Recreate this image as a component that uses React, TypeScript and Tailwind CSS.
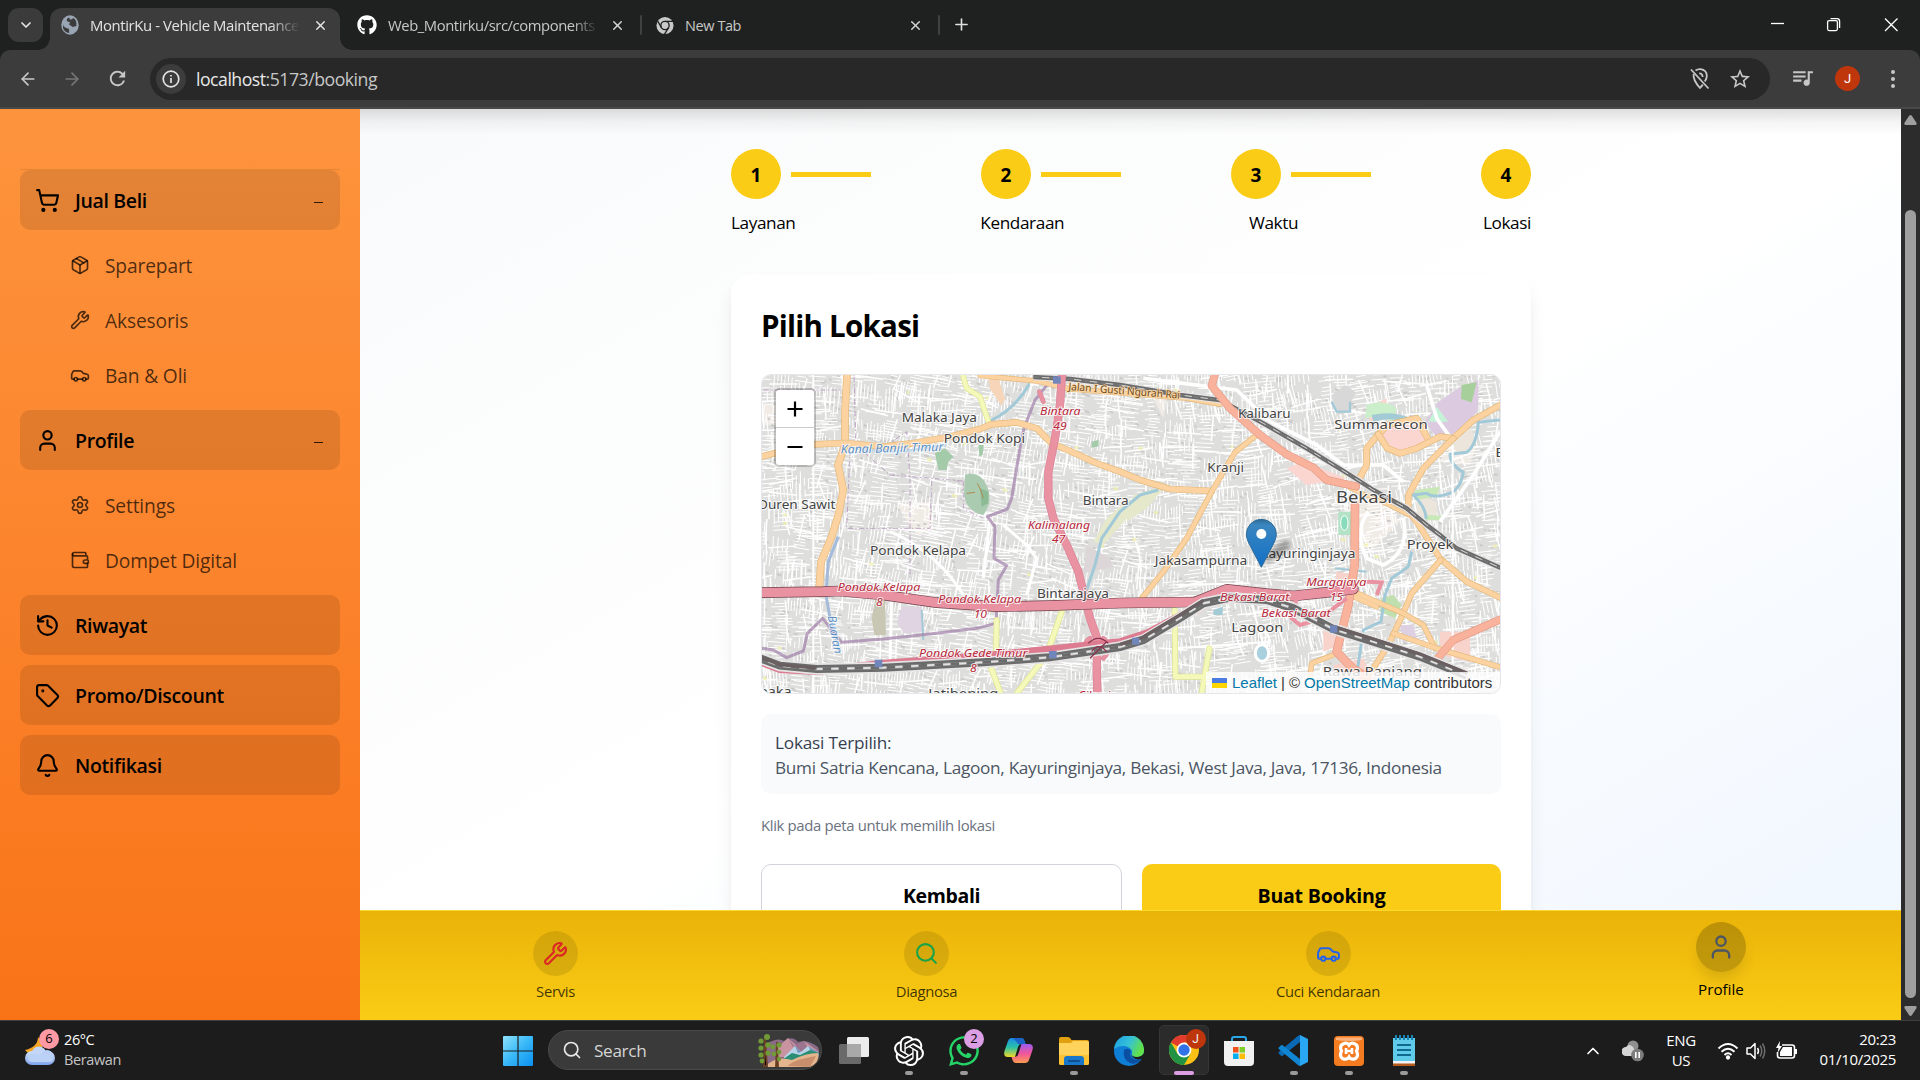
import React from "react";
import {
  ArrowLeft,
  ArrowRight,
  Bell,
  Car,
  ChevronDown,
  ChevronUp,
  History,
  Package,
  Plus,
  Search,
  Settings,
  ShoppingCart,
  Tag,
  User,
  Wallet,
  Wrench,
  X,
} from "lucide-react";
import { FaGithub, FaWhatsapp } from "react-icons/fa";
import { SiOpenai } from "react-icons/si";
import { MdOutlineStarBorder, MdQueueMusic, MdRefresh } from "react-icons/md";

/* ---------------------------------------------------------------- browser */

function TabStrip() {
  return (
    <div className="flex h-[50px] w-full bg-[#1f2120] text-[14.5px] text-[#c7c7c7]">
      <div className="mt-2 ml-2 flex h-[34px] w-[35px] items-center justify-center rounded-[11px] bg-[#3b3b3b] text-[#e3e3e3]">
        <ChevronDown size={16} strokeWidth={2.6} />
      </div>
      <div className="relative mt-2 ml-[7px] flex h-[42px] w-[290px] items-center rounded-t-[12px] bg-[#3c3c3c] pl-[11px] text-[#e3e3e3]">
        <div className="absolute bottom-0 -left-3 h-3 w-3 bg-[radial-gradient(circle_at_0_0,transparent_11.5px,#3c3c3c_12px)]" />
        <div className="absolute -right-3 bottom-0 h-3 w-3 bg-[radial-gradient(circle_at_100%_0,transparent_11.5px,#3c3c3c_12px)]" />
        <svg width="18" height="20" viewBox="0 0 20 20" className="-mt-[6px] mb-[2px]" preserveAspectRatio="none">
          <circle cx="10" cy="10" r="9.7" fill="#9aa5b3" />
          <path d="M3 8 Q2 12 6 13 L9 14 V18 Q4 17.5 2.2 13 Z M9 2.5 Q5 4 7 6.5 L10 7 L9 9.5 L13 12 L17 11 Q18 5 13.5 3 Q12 5 10 4.5 Z" fill="#3c3c3c" />
        </svg>
        <div className="mt-[-8px] ml-[11px] w-[210px] overflow-hidden whitespace-nowrap text-[14.9px] tracking-[-0.4px] [mask-image:linear-gradient(to_right,#000_86%,transparent)]">
          MontirKu - Vehicle Maintenance
        </div>
        <X size={15} strokeWidth={2.3} className="-mt-[8px] ml-[13px]" />
      </div>
      <div className="flex h-[50px] w-[300px] items-center pl-[17px]">
        <FaGithub size={20} className="text-white" />
        <div className="mt-px ml-[11px] w-[210px] overflow-hidden whitespace-nowrap text-[14.8px] tracking-[-0.42px] [mask-image:linear-gradient(to_right,#000_88%,transparent)]">
          Web_Montirku/src/components
        </div>
        <X size={15} strokeWidth={2.3} className="ml-[12px] text-[#d5d5d5]" />
      </div>
      <div className="mt-[15px] h-[20px] w-[2px] rounded bg-[#3f4140]" />
      <div className="flex h-[50px] w-[296px] items-center pl-[14px]">
        <svg width="18" height="19" viewBox="0 0 20 20">
          <circle cx="10" cy="10" r="9.5" fill="#c9c9c9" />
          <circle cx="10" cy="10" r="4.6" fill="none" stroke="#1f2120" strokeWidth="1.5" />
          <path d="M10 5.4 H19 M6 12.3 L1.8 5 M14 12.3 L9.5 19.5" stroke="#1f2120" strokeWidth="1.5" />
        </svg>
        <div className="mt-px ml-[11px] w-[223px] whitespace-nowrap tracking-[-0.42px]">New Tab</div>
        <X size={15} strokeWidth={2.3} className="text-[#d5d5d5]" />
      </div>
      <div className="mt-[15px] h-[20px] w-[2px] rounded bg-[#3f4140]" />
      <Plus size={19} strokeWidth={2.1} className="mt-[15px] ml-[12px] text-[#e0e0e0]" />
      <svg width="130" height="16" viewBox="0 0 130 16" className="mt-[16px] mr-[21px] ml-auto" fill="none" stroke="#fff" strokeWidth="1.3">
        <path d="M2 7.5 H15" />
        <rect x="58.6" y="4.6" width="9.8" height="10" rx="1.5" />
        <path d="M61.5 2.6 H68 Q70.6 2.6 70.6 5.2 V12" />
        <path d="M116 2.5 L128.500 15 M128.500 2.5 L116 15" />
      </svg>
    </div>
  );
}

function Toolbar() {
  return (
    <div className="w-full bg-[#1f2120]">
      <div className="flex h-[59px] w-full items-center rounded-t-[10px] border-b-2 border-[#494949] bg-[#3c3c3c] text-[#c7c7c7]">
        <ArrowLeft size={20} strokeWidth={2} className="ml-[18px]" />
        <ArrowRight size={20} strokeWidth={2} className="ml-[24px] text-[#777]" />
        <MdRefresh size={23} className="ml-[24px]" />
        <div className="ml-[21px] flex h-[42px] w-[1620px] items-center rounded-full bg-[#282828]">
          <div className="ml-[6px] flex h-[30px] w-[30px] items-center justify-center rounded-full bg-[#3c3c3c]">
            <svg width="18" height="18" viewBox="0 0 18 18" fill="none" stroke="#e3e3e3" strokeWidth="1.7">
              <circle cx="9" cy="9" r="7.8" />
              <path d="M9 8 V13 M9 5 V6.6" />
            </svg>
          </div>
          <div className="mt-[2px] ml-[10px] text-[17.7px] tracking-[-0.5px] whitespace-nowrap text-[#c7c7c7]">
            <span className="text-[#e8e8e8]">localhost</span>:5173/booking
          </div>
          <svg width="20" height="22" viewBox="0 0 20 22" className="ml-auto" fill="none" stroke="#c7c7c7" strokeWidth="1.8">
            <path d="M1 1.5 L18.5 20.5" />
            <path d="M5.5 2.6 Q8 .9 10.5 1.2 Q16.8 2 16.8 8 Q16.8 10.6 14.8 13.6" />
            <path d="M3.6 6 Q2.8 12 10 20 Q11.6 18.2 12.8 16.6" />
            <path d="M9.2 5.4 Q12.6 5.4 12.6 9" />
          </svg>
          <MdOutlineStarBorder size={24} className="mr-[18px] ml-[18px]" />
        </div>
        <MdQueueMusic size={25} className="mt-[-3px] ml-[20px]" />
        <div className="ml-[20px] flex h-[25px] w-[25px] items-center justify-center rounded-full bg-[#bf360c] font-['Roboto',sans-serif] text-[13px] text-white">J</div>
        <div className="ml-[31px] flex flex-col gap-[3px]">
          <div className="h-1 w-1 rounded-full bg-[#c7c7c7]" />
          <div className="h-1 w-1 rounded-full bg-[#c7c7c7]" />
          <div className="h-1 w-1 rounded-full bg-[#c7c7c7]" />
        </div>
      </div>
    </div>
  );
}

/* ---------------------------------------------------------------- sidebar */

type IconType = React.ComponentType<{ size?: number; strokeWidth?: number; className?: string }>;

function MenuButton({ icon: Icon, label, open }: { icon: IconType; label: string; open?: boolean }) {
  return (
    <div className="flex h-[60px] w-[320px] items-center rounded-[10px] bg-black/10 px-[15px] text-black">
      <Icon size={25} strokeWidth={2} />
      <span className="mt-[2px] ml-[15px] text-[19.5px] font-semibold tracking-[-0.35px]">{label}</span>
      {open && <span className="mt-[4px] mr-[2px] ml-auto h-px w-[9px] bg-black/80" />}
    </div>
  );
}

function SubItem({ icon: Icon, label }: { icon: IconType; label: string }) {
  return (
    <div className="flex h-[50px] items-center pl-[50px] text-black/70">
      <Icon size={20} strokeWidth={2} />
      <span className="mt-[2px] ml-[15px] text-[19.2px] tracking-[-0.15px]">{label}</span>
    </div>
  );
}

function Sidebar() {
  return (
    <div className="h-[911px] w-[360px] shrink-0 bg-linear-to-b from-[#fd943d] to-[#f97316] px-5 pt-[60px]">
      <div className="border-t border-[#e58637]" />
      <MenuButton icon={ShoppingCart} label="Jual Beli" open />
      <div className="my-[10px] flex flex-col gap-[5px]">
        <SubItem icon={Package} label="Sparepart" />
        <SubItem icon={Wrench} label="Aksesoris" />
        <SubItem icon={Car} label="Ban & Oli" />
      </div>
      <MenuButton icon={User} label="Profile" open />
      <div className="my-[10px] flex flex-col gap-[5px]">
        <SubItem icon={Settings} label="Settings" />
        <SubItem icon={Wallet} label="Dompet Digital" />
      </div>
      <div className="flex flex-col gap-[10px]">
        <MenuButton icon={History} label="Riwayat" />
        <MenuButton icon={Tag} label="Promo/Discount" />
        <MenuButton icon={Bell} label="Notifikasi" />
      </div>
    </div>
  );
}

/* -------------------------------------------------------------------- map */

function seeded(seed: number) {
  let s = seed;
  return () => {
    s = (s * 1664525 + 1013904223) % 4294967296;
    return s / 4294967296;
  };
}

function buildStreets() {
  const rnd = seeded(42);
  let streets = "";
  let wide = "";
  let blocks = "";
  let dots = "";
  const add = (cx: number, cy: number, a: number, u0: number, v0: number, u1: number, v1: number) => {
    const c = Math.cos(a);
    const s = Math.sin(a);
    const x0 = cx + u0 * c - v0 * s;
    const y0 = cy + u0 * s + v0 * c;
    const x1 = cx + u1 * c - v1 * s;
    const y1 = cy + u1 * s + v1 * c;
    return `M${x0.toFixed(0)} ${y0.toFixed(0)}L${x1.toFixed(0)} ${y1.toFixed(0)}`;
  };
  for (let y = 20; y < 1010; y += 50) {
    for (let x = 20; x < 2280; x += 56) {
      const cx = x + rnd() * 30;
      const cy = y + rnd() * 30;
      const a = (rnd() - 0.5) * 0.25 + Math.sin(x / 400) * 0.15;
      const step = 8 + rnd() * 7;
      const along = rnd() > 0.5;
      for (let t = -28; t < 28; t += step) {
        const l = 10 + rnd() * 20;
        const off = (rnd() - 0.5) * 20;
        streets += along ? add(cx, cy, a, t, off - l, t, off + l) : add(cx, cy, a, off - l, t, off + l, t);
        if (rnd() > 0.5) {
          blocks += add(cx, cy, a, t + 5, off, t + 5 + rnd() * 14, off + 4);
        }
      }
      if (rnd() > 0.5) wide += add(cx, cy, a, -42, rnd() * 26, 42, rnd() * 26);
      if (rnd() > 0.5) wide += add(cx, cy, a, rnd() * 26, -38, rnd() * 26, 38);
      if (rnd() > 0.95) dots += add(cx, cy, a, 0, 0, 8 + rnd() * 8, 3);
    }
  }
  return { streets, wide, blocks, dots };
}

const net = buildStreets();

function Road({ d, color, w, casing }: { d: string; color: string; w: number; casing: string }) {
  return (
    <g fill="none" strokeLinejoin="round" strokeLinecap="round">
      <path d={d} stroke={casing} strokeWidth={w + 4} />
      <path d={d} stroke={color} strokeWidth={w} />
    </g>
  );
}

const ORANGE = { color: "#fcd3a0", casing: "#e3b87a" };
const SALMON = { color: "#f9b29c", casing: "#e59c86" };
const TRUNK = { color: "#e892a2", casing: "#dc8398" };
const YELLOW = { color: "#f4f8b8", casing: "#dde293" };

function Rail({ d, thin }: { d: string; thin?: boolean }) {
  return (
    <g fill="none">
      <path d={d} stroke="#e6e4e4" strokeWidth={thin ? 20 : 34} />
      <path d={d} stroke="#6b6b6b" strokeWidth={thin ? 13 : 24} />
      <path d={d} stroke="#a8a8a8" strokeWidth={thin ? 3 : 9} />
      <path d={d} stroke="#6b6b6b" strokeWidth={thin ? 3 : 9} strokeDasharray="26 22" />
      <path d={d} stroke="#e4e4e4" strokeWidth={thin ? 2 : 5} strokeDasharray="22 26" strokeDashoffset="-26" />
    </g>
  );
}

function Label({ x, y, w, t, size = 40, fill = "#444" }: { x: number; y: number; w: number; t: string; size?: number; fill?: string }) {
  return (
    <text x={x} y={y} textLength={w} lengthAdjust="spacingAndGlyphs" fontSize={size} fill={fill} stroke="#ffffffcc" strokeWidth="6" paintOrder="stroke" strokeLinejoin="round">
      {t}
    </text>
  );
}

function RedLabel({ x, y, w, t }: { x: number; y: number; w: number; t: string }) {
  return (
    <text x={x} y={y} textLength={w} lengthAdjust="spacingAndGlyphs" fontSize="35" fontStyle="italic" fill="#b8283a" stroke="#ffffffcc" strokeWidth="6" paintOrder="stroke">
      {t}
    </text>
  );
}

function MapCanvas() {
  return (
    <svg width="738" height="318" viewBox="36 30 2214 954" className="block font-['Noto_Sans',sans-serif]">
      <rect x="0" y="0" width="2300" height="1000" fill="#dededd" />
      <g fill="#f0ebe5">
        <path d="M40 120 h90 v60 h-90z M440 420 l60 90 50 -20 -10 -80z M1780 420 l110 -30 60 80 -90 90z M2100 200 l80 40 -20 60 -90 -10z M1200 80 l50 20 -10 60z" />
      </g>
      <path d={net.blocks} stroke="#cbcac9" strokeWidth="6" fill="none" />
      <path d={net.streets} stroke="#fff" strokeWidth="3" fill="none" />
      <path d={net.wide} stroke="#fff" strokeWidth="4.5" fill="none" />
      <path d={net.dots} stroke="#eef0a6" strokeWidth="9" fill="none" opacity="0.7" />

      <g>
        <path d="M645 330 Q690 315 712 365 Q730 410 700 450 Q650 440 642 390Z" fill="#aacbaf" />
        <path d="M690 370 l25 10 v35 l-20 10z" fill="#8dbb95" />
        <path d="M650 385 l25 -3 M682 355 l10 20 8 25" stroke="#b08a50" strokeWidth="3" fill="none" />
        <path d="M555 265 l30 -15 25 25 -15 15 -5 25 -25 0z M685 240 h16 l-3 30 -10 4z M1026 230 l20 -6 0 20 -22 4z" fill="#a3cba9" />
        <path d="M455 725 l60 0 8 75 -60 5 -22 -30z" fill="#e0d4e2" />
        <path d="M375 705 l30 0 3 105 -35 0 -8 -50z" fill="#c8c7b4" />
        <path d="M715 40 l30 0 20 60 -10 22 -35 -50z" fill="#f6d5b8" />
        <path d="M1140 400 l0 50 -80 90 -30 -10 40 -70z M1150 390 l100 -30 -60 70 -60 40z" fill="#e5e8cb" />
        <path d="M1010 540 l70 40 10 25 -90 20z" fill="#dcd6d8" />
        <path d="M2025 170 l40 -60 60 -40 60 -25 0 90 -60 70 -60 20z" fill="#dccbe0" />
        <path d="M2060 125 l35 45 -60 0z" fill="#c5f3d8" />
        <path d="M2135 60 l45 -8 -15 60 -32 -10z" fill="#a7cf9c" />
        <path d="M1895 180 l110 0 40 50 -110 30 -40 -30z M1790 340 l-130 -50 -50 20 60 50z M1850 130 l60 -30 0 50 -50 20z" fill="#fbd5cf" />
        <path d="M1850 120 q50 -20 90 10 l-10 40 q-60 -20 -85 -10z" fill="#cbeecb" />
        <path d="M1865 150 q60 -15 120 10 l-10 12 q-60 -18 -105 -2z" fill="#a2cbd5" />
        <path d="M2100 240 l60 -50 20 40 -50 40z M2000 390 l60 20 0 55 -60 -10z" fill="#ece5dc" />
        <path d="M1745 90 l40 -30 30 20 -20 60 -30 10z" fill="#d8d8d8" />
        <path d="M1995 375 l75 -10 -10 30 -65 10z M2030 450 l45 2 0 14 -50 0z" fill="#c8e8b8" />
        <rect x="1765" y="440" width="38" height="70" fill="#b3e2c6" />
        <ellipse cx="1783" cy="474" rx="11" ry="22" fill="#88dcbc" stroke="#fff" strokeWidth="3" />
        <path d="M1760 620 l60 10 0 50 -70 0z M1720 780 l60 0 -10 60 -50 20z M2070 800 l90 0 0 90 -90 -20z M1750 900 l90 -20 30 60 -100 20z" fill="#f7d3cc" />
        <path d="M1370 690 l0 40 -30 20 -10 -40z" fill="#f6cfcb" />
        <path d="M1895 700 l35 -10 25 30 -20 40 -45 -20z" fill="#bfe0ae" />
        <path d="M1950 780 l40 0 10 40 -40 10z" fill="#ddd0e2" />
      </g>

      <g fill="none" stroke="#a2c9d8" strokeWidth="9" strokeLinejoin="round">
        <path d="M845 45 Q800 130 720 168" />
        <path d="M590 240 L440 262 L310 250" stroke="#bcd6e6" strokeWidth="7" />
        <path d="M1225 375 L1170 390 L1110 440 L1055 520 L1035 600 L1005 690" />
        <path d="M265 515 L235 590 L228 690 L240 760 L270 860" stroke="#a4bbd9" />
        <path d="M2250 165 L2185 172 Q2180 240 2150 262 L2100 268 Q2100 300 2140 322 Q2130 380 2090 388 Q2050 400 2030 385 L1990 390 Q2030 430 2028 462" />
        <path d="M1985 560 L1975 605 L1925 640 L1905 690 L1893 770 L1840 795 L1820 930" />
        <path d="M1755 610 L1850 620 M515 735 l5 90" strokeWidth="6" />
        <path d="M1745 110 l15 30 40 0 0 -30" strokeWidth="7" />
      </g>

      <g fill="none" stroke="#fff" strokeLinejoin="round">
        <path d="M840 60 L905 40 M720 455 L700 640 M760 480 L830 540 L860 580 L830 690 M425 690 L420 900 M420 500 Q560 560 640 690" strokeWidth="9" />
        <path d="M1180 40 L1460 75 L1560 170 L1700 240 L1780 300 L1900 300 L1960 350 M2030 60 L2060 160 L2110 230 M2250 200 L2170 330 L2070 470 M1855 440 Q1810 500 1850 580 L1900 600 Q1980 560 1960 460" strokeWidth="11" />
        <path d="M1500 700 L1540 840 M1280 850 L1560 830 M190 30 L190 985 M2108 240 L2108 985 M1530 800 q40 0 20 50 M1280 660 L1500 655" strokeWidth="6" />
      </g>
      <ellipse cx="1536" cy="864" rx="20" ry="25" fill="#a9d0dd" stroke="#fff" strokeWidth="9" />
      <path d="M1390 735 l28 -10 0 25 -28 0z" fill="#a2cbd5" />

      <g fill="none" stroke="#b592bd" strokeWidth="3" strokeDasharray="16 7 4 7" opacity="0.8">
        <path d="M312 35 L318 240 L420 330 L640 348 M40 75 H300 M300 255 L290 490 L540 490 L545 340 M480 340 L480 640 M380 260 L470 200 L480 335 M640 348 L640 430 L700 460" />
      </g>
      <path d="M895 55 L855 105 L822 190 L803 290 L785 400 L772 432 L712 455 L735 485 L732 580 L770 602 L745 645 L738 775 L680 790 L560 805 L400 822 L275 832 L218 760 L172 805 L160 858 L110 878 L70 855 L36 850" fill="none" stroke="#a07fa8" strokeWidth="9" opacity="0.7" strokeLinejoin="round" />

      <Road d="M640 35 L650 70 L690 95 L718 178" w={13} {...YELLOW} />
      <Road d="M935 740 L890 870 L800 985" w={14} {...YELLOW} />
      <Road d="M740 765 L738 870 L722 905 L752 985" w={14} {...YELLOW} />
      <Road d="M1274 735 L1276 935 L1390 935 M1378 850 L1355 985" w={14} {...YELLOW} />

      <Road d="M291 30 L285 140 L285 240 L264 300 L280 375 L265 450 L245 515 L213 590 L208 665" w={19} {...ORANGE} />
      <Road d="M30 276 L90 260 L195 238 L285 234 L400 245 L480 236 L600 215 L690 192 L725 178 L800 172 L860 190 L905 235 L960 258 L1040 295 L1110 320 L1170 345 L1260 372 L1385 378" w={16} {...ORANGE} />
      <Road d="M690 32 L860 48 L960 72 L1140 86 L1310 100 L1410 118" w={12} {...ORANGE} />
      <Road d="M1516 213 L1455 262 L1385 380 L1310 520 L1240 620 L1175 700" w={13} {...ORANGE} />
      <Road d="M1815 365 L1850 300 L1850 250 L1885 208 L1912 180 L2000 160 L2032 218" w={16} {...ORANGE} />
      <Road d="M1885 208 L1912 250 L1950 265 L2000 250 L2070 215 L2110 220 L2170 165 L2255 118" w={16} {...ORANGE} />
      <Road d="M2110 220 L2020 310 L1975 390 L1975 440 L2000 470 L2070 580 L2150 650 L2255 700" w={15} {...ORANGE} />
      <Road d="M1800 370 L1900 412 L1975 450" w={9} {...ORANGE} />
      <Road d="M2072 585 L1985 685 L1955 755 L1915 840 L1860 925" w={14} {...ORANGE} />
      <Road d="M1800 675 L1890 715 L1960 745 L2020 780 L2055 850 M1800 690 L1880 725" w={13} {...ORANGE} />
      <Road d="M1930 805 L2060 850 L2245 905" w={13} {...ORANGE} />
      <Road d="M1680 935 L1685 895 L1755 868" w={12} {...ORANGE} />

      <Rail thin d="M850 36 L960 42 L1110 60 L1290 90 L1410 105 L1540 175 L1670 250 L1800 330 L1870 375 L1970 430 L2030 480 L2070 510 L2120 550 L2255 610" />

      <Road d="M1395 28 L1385 62 L1440 130 L1530 210 L1610 268 L1690 308 L1730 345 L1818 364" w={20} {...SALMON} />
      <Road d="M1815 420 L1814 600 L1795 720 L1775 800 L1760 860 L1810 912 L1850 935" w={22} {...SALMON} />
      <Road d="M2255 762 L2110 825 L2050 895" w={20} {...SALMON} />

      <Road d="M936 28 L930 120 L915 220 L895 320 L895 400 L910 460 L950 540 L985 620 L1005 700 L1020 760 L1045 830 L1040 900 L1042 985" w={21} {...TRUNK} />
      <Road d="M868 80 L880 110 M1010 860 Q1000 830 1020 820 M1060 820 Q1090 850 1060 880" w={10} {...TRUNK} />
      <Road d="M30 683 L220 680 L270 678 L400 690 L560 713 L740 725 L900 722 L1110 714 L1335 711 L1430 673 L1540 685 L1630 693 L1750 680 L1810 672" w={28} color="#e892a2" casing="#72404a" />
      <path d="M1850 650 L1895 652 L1880 690 M1640 700 L1625 760 L1650 780 L1700 765 L1750 730 L1790 700" fill="none" stroke="#e892a2" strokeWidth="12" />

      <path d="M36 892 L90 912 L200 918 L400 896 L700 874 L1110 832 L1190 806 L1300 748" fill="none" stroke="#dd7b90" strokeWidth="24" />
      <Rail d="M30 880 L90 902 L200 912 L400 908 L700 892 L900 877 L1110 846 L1180 825 L1280 765 L1360 715 L1440 698 L1550 705 L1630 730 L1750 792 L1870 830 L2010 875 L2150 932" />
      <path d="M36 878 L90 899 L200 909 M1110 838 L1180 816 L1280 756 L1360 706 M1750 784 L2010 867 L2150 924" fill="none" stroke="#6a6062" strokeWidth="10" />
      <path d="M1015 835 q30 -30 60 0 M1025 860 q20 -30 45 0 M1020 880 l50 -50" fill="none" stroke="#8a3550" strokeWidth="4" />

      <g fill="#7186bb">
        <rect x="909" y="34" width="23" height="22" />
        <rect x="374" y="884" width="23" height="23" />
        <rect x="897" y="858" width="23" height="22" />
        <rect x="1740" y="781" width="22" height="22" />
        <rect x="1146" y="818" width="22" height="21" />
      </g>

      <Label x={455} y={171} w={226} t="Malaka Jaya" />
      <Label x={581} y={234} w={244} t="Pondok Kopi" />
      <Label x={24} y={432} w={232} t="Duren Sawit" />
      <Label x={360} y={570} w={288} t="Pondok Kelapa" />
      <Label x={998} y={419} w={138} t="Bintara" />
      <Label x={861} y={700} w={216} t="Bintarajaya" />
      <Label x={1464} y={160} w={158} t="Kalibaru" />
      <Label x={1753} y={192} w={280} t="Summarecon" />
      <Label x={1372} y={320} w={110} t="Kranji" />
      <Label x={1758} y={413} w={168} t="Bekasi" size={49} />
      <Label x={1970} y={553} w={140} t="Proyek" />
      <Label x={1214} y={600} w={278} t="Jakasampurna" />
      <Label x={1530} y={578} w={286} t="Kayuringinjaya" />
      <Label x={1444} y={801} w={156} t="Lagoon" />
      <Label x={1718} y={934} w={298} t="Rawa Panjang" />
      <Label x={2236} y={276} w={26} t="E" />
      <Label x={0} y={992} w={125} t="npaka" />
      <Label x={535} y={1000} w={210} t="Jatibening" />

      <RedLabel x={870} y={150} w={122} t="Bintara" />
      <RedLabel x={910} y={195} w={40} t="49" />
      <RedLabel x={834} y={492} w={186} t="Kalimalang" />
      <RedLabel x={906} y={535} w={40} t="47" />
      <RedLabel x={263} y={678} w={248} t="Pondok Kelapa" />
      <RedLabel x={378} y={722} w={20} t="8" />
      <RedLabel x={565} y={715} w={248} t="Pondok Kelapa" />
      <RedLabel x={671} y={759} w={40} t="10" />
      <RedLabel x={507} y={876} w={325} t="Pondok Gede Timur" />
      <RedLabel x={660} y={920} w={20} t="8" />
      <RedLabel x={1410} y={709} w={208} t="Bekasi Barat" />
      <RedLabel x={1534} y={757} w={208} t="Bekasi Barat" />
      <RedLabel x={1669} y={663} w={180} t="Margajaya" />
      <RedLabel x={1740} y={708} w={38} t="15" />
      <RedLabel x={985} y={1003} w={110} t="Cikunir" />

      <text fontSize="36" fontStyle="italic" fill="#5a8fc4" stroke="#ffffffcc" strokeWidth="5" paintOrder="stroke" x="272" y="262" textLength="308" lengthAdjust="spacingAndGlyphs" transform="rotate(-1.5 420 255)">
        Kanal Banjir Timur
      </text>
      <text fontSize="35" fontStyle="italic" fill="#5a8fc4" stroke="#ffffffcc" strokeWidth="5" paintOrder="stroke" transform="translate(233 754) rotate(80)" textLength="115" lengthAdjust="spacingAndGlyphs">
        Buaran
      </text>
      <text fontSize="31" fill="#6b4a20" stroke="#fcd6a4" strokeWidth="5" paintOrder="stroke" transform="translate(955 75) rotate(4.5)" textLength="335" lengthAdjust="spacingAndGlyphs">
        Jalan I Gusti Ngurah Rai
      </text>

      <defs>
        <linearGradient id="pin" x1="0" y1="0" x2="0" y2="1">
          <stop offset="0" stopColor="#2e6c97" />
          <stop offset="0.12" stopColor="#3a86c0" />
          <stop offset="1" stopColor="#126fc6" />
        </linearGradient>
        <filter id="soft" x="-30%" y="-30%" width="160%" height="160%">
          <feGaussianBlur stdDeviation="7" />
        </filter>
      </defs>
      <path d="M1536 604 L1560 560 Q1600 515 1618 530 Q1630 550 1590 575 Z" fill="#000" opacity="0.3" filter="url(#soft)" />
      <path d="M1534 607 L1502 545 Q1489 522 1489 508 A45 45 0 0 1 1579 508 Q1579 522 1566 545 Z" fill="url(#pin)" stroke="#2e6c97" strokeWidth="3" />
      <circle cx="1534" cy="507" r="15" fill="#fff" />
    </svg>
  );
}

function MapPanel() {
  return (
    <div className="relative h-[320px] w-[740px] overflow-hidden rounded-[10px] border border-[#e5e7eb]">
      <MapCanvas />
      <div className="absolute top-[13px] left-[12px] w-[42px] overflow-hidden rounded-[5px] border-2 border-black/20 bg-white bg-clip-padding">
        <div className="flex h-[38px] items-center justify-center border-b border-[#ccc]">
          <svg width="16" height="16" viewBox="0 0 16 16" stroke="#000" strokeWidth="2.2">
            <path d="M.5 8 H15.5 M8 .5 V15.5" />
          </svg>
        </div>
        <div className="flex h-[37px] items-center justify-center">
          <svg width="16" height="16" viewBox="0 0 16 16" stroke="#000" strokeWidth="2">
            <path d="M.5 8 H15.5" />
          </svg>
        </div>
      </div>
      <div className="absolute right-0 bottom-0 flex h-[21px] w-[294px] items-center bg-white/80 pt-px pl-[6px] font-['Liberation_Sans',Arial,sans-serif] text-[15px] whitespace-nowrap text-[#333]">
        <svg width="15" height="10" viewBox="0 0 15 10">
          <rect width="15" height="5" fill="#4c7be1" />
          <rect y="5" width="15" height="5" fill="#ffd500" />
        </svg>
        <span className="ml-[5px] text-[#0078a8]">Leaflet</span>
        <span className="ml-1">|</span>
        <span className="ml-1">©</span>
        <span className="ml-1 text-[#0078a8]">OpenStreetMap</span>
        <span className="ml-1">contributors</span>
      </div>
    </div>
  );
}

/* ------------------------------------------------------------------- page */

function Step({ n, last }: { n: number; last?: boolean }) {
  return (
    <div className={last ? "flex w-[50px] items-center" : "flex w-[250px] items-center"}>
      <div className="flex h-[50px] w-[50px] items-center justify-center rounded-full bg-[#facc15] pt-[3px] text-[19px] font-bold text-black">{n}</div>
      {!last && <div className="ml-[10px] h-[5px] w-[80px] bg-[#facc15]" />}
    </div>
  );
}

function NavItem({ icon: Icon, label, tint, width }: { icon: IconType; label: string; tint: string; width: string }) {
  return (
    <div className={`flex flex-col items-center pt-[20px] ${width}`}>
      <div className={`flex h-[45px] w-[45px] items-center justify-center rounded-full bg-black/10 ${tint}`}>
        <Icon size={25} strokeWidth={2} />
      </div>
      <span className="mt-[5px] text-[14.8px] leading-5 font-medium tracking-[-0.3px] whitespace-nowrap text-black/75">{label}</span>
    </div>
  );
}

function BottomNav() {
  return (
    <div className="absolute bottom-0 left-0 flex h-[110px] w-[1541px] justify-between border-t border-[#fbd92f] bg-linear-to-b from-[#eab308] to-[#facc15] pr-[155px] pl-[173px]">
      <NavItem icon={Wrench} label="Servis" tint="text-[#dc2626]" width="w-[45px]" />
      <NavItem icon={Search} label="Diagnosa" tint="text-[#16a34a]" width="ml-[2px] w-[63px]" />
      <NavItem icon={Car} label="Cuci Kendaraan" tint="text-[#2563eb]" width="ml-[2px] w-[106px]" />
      <div className="flex w-[50px] flex-col items-center pt-[11px]">
        <div className="flex h-[50px] w-[50px] items-center justify-center rounded-full bg-black/20 text-[#4b5563] shadow-[0_10px_15px_-3px_rgba(0,0,0,0.12)]">
          <User size={28} strokeWidth={2} />
        </div>
        <span className="mt-[7px] text-[15.2px] leading-5 font-medium tracking-[0px] text-black">Profile</span>
      </div>
    </div>
  );
}

function Main() {
  return (
    <div className="relative h-[911px] w-[1541px] shrink-0 overflow-hidden bg-linear-to-br from-[#f9fafb] via-white via-50% to-[#eff6ff]">
      <div className="absolute top-0 left-0 h-[26px] w-full bg-linear-to-b from-black/13 via-black/4 to-transparent" />
      <div className="ml-[371px] w-[800px] pt-[40px]">
        <div className="flex">
          <Step n={1} />
          <Step n={2} />
          <Step n={3} />
          <Step n={4} last />
        </div>
        <div className="mt-[11px] flex h-[25px] items-center justify-between text-[17.2px] leading-[25px] tracking-[-0.4px] text-black">
          <span>Layanan</span>
          <span>Kendaraan</span>
          <span>Waktu</span>
          <span>Lokasi</span>
        </div>
        <div className="mt-[39px] h-[760px] w-[800px] rounded-[20px] bg-white px-[30px] pt-[32px] shadow-[0_12px_19px_-4px_rgba(0,0,0,0.1),0_5px_8px_-5px_rgba(0,0,0,0.08)]">
          <h1 className="mb-[28px] h-[40px] text-[29.5px] leading-[39px] font-bold tracking-[-0.75px] text-black">Pilih Lokasi</h1>
          <MapPanel />
          <div className="mt-[20px] h-[80px] rounded-[10px] bg-[#f9fafb] px-[14px] pt-[16px] text-[17.2px] leading-[25px] whitespace-nowrap">
            <div className="font-medium tracking-[-0.2px] text-[#374151]">Lokasi Terpilih:</div>
            <div className="tracking-[-0.3px] text-[#4b5563]">Bumi Satria Kencana, Lagoon, Kayuringinjaya, Bekasi, West Java, Java, 17136, Indonesia</div>
          </div>
          <div className="mt-[20px] h-[20px] text-[14.9px] leading-[22px] tracking-[-0.35px] text-[#6b7280]">Klik pada peta untuk memilih lokasi</div>
          <div className="mt-[30px] flex justify-between text-[19.5px] font-bold tracking-[-0.35px] text-black">
            <div className="flex h-[64px] w-[361px] items-center justify-center rounded-[10px] border border-[#d1d5db]">Kembali</div>
            <div className="flex h-[64px] w-[359px] items-center justify-center rounded-[10px] bg-[#facc15] tracking-[-0.2px]">Buat Booking</div>
          </div>
        </div>
      </div>
      <BottomNav />
    </div>
  );
}

function Scrollbar() {
  return (
    <div className="flex h-[911px] w-[19px] shrink-0 flex-col items-center bg-[#2c2c2c] pt-[6px]">
      <svg width="13" height="10" viewBox="0 0 13 10" fill="#9f9f9f">
        <path d="M6.5 0 Q7.3 0 8 1 L12.6 8 Q13 10 11.5 10 H1.5 Q0 10 .4 8 L5 1 Q5.7 0 6.5 0Z" />
      </svg>
      <div className="mt-[85px] h-[788px] w-[11px] rounded-full bg-[#9f9f9f]" />
      <svg width="13" height="10" viewBox="0 0 13 10" fill="#9f9f9f" className="mt-[8px]">
        <path d="M6.5 10 Q7.3 10 8 9 L12.6 2 Q13 0 11.5 0 H1.5 Q0 0 .4 2 L5 9 Q5.7 10 6.5 10Z" />
      </svg>
    </div>
  );
}

/* ---------------------------------------------------------------- taskbar */

function TaskCell({ children, running }: { children: React.ReactNode; running?: boolean }) {
  return (
    <div className="relative flex h-full w-[55px] shrink-0 items-center justify-center">
      {children}
      {running && <div className="absolute bottom-[5px] left-[24px] h-[4px] w-[8px] rounded-full bg-[#9a9a9a]" />}
    </div>
  );
}

function SearchArt() {
  return (
    <svg width="62" height="34" viewBox="0 0 62 34">
      <path d="M10 10 Q20 4 26 8 Q34 2 40 9 Q50 6 60 14 Q64 24 54 32 H10 Q4 20 10 10Z" fill="#8a6a86" />
      <path d="M20 14 L30 5 L38 12 L46 8 L60 18 V24 H20Z" fill="#c994a0" />
      <path d="M30 5 L35 14 L38 12 L46 8 L50 15 L60 18 L52 20 L40 18Z" fill="#7d5f86" opacity="0.6" />
      <path d="M26 24 L37 13 L43 19 L50 13 L61 20 L60 25 H26Z" fill="#b7d3e8" />
      <path d="M37 13 L40 20 L43 19Z M50 13 L54 20 L61 20Z" fill="#6f93bb" />
      <path d="M24 27 L34 20 L42 22 L52 17 L61 20 L58 27 H24Z" fill="#2b8d74" />
      <path d="M8 33 Q18 22 34 27 Q48 20 60 20 Q62 30 52 34 H10Z" fill="#e4b58c" />
      <path d="M30 33 Q34 27 58 23 L52 34Z" fill="#c98f6c" />
      <path d="M6 33 L7 4 L9 33Z M18 33 L19 9 L20 33Z" stroke="#6b3f24" strokeWidth="1.8" />
      <g fill="#6f9a36">
        <circle cx="3" cy="8" r="2.6" />
        <circle cx="9" cy="4" r="3" />
        <circle cx="3" cy="15" r="2.6" />
        <circle cx="10" cy="12" r="2.8" />
        <circle cx="3" cy="22" r="2.6" />
        <circle cx="10" cy="20" r="2.6" />
        <circle cx="4" cy="28" r="2.4" />
        <circle cx="15" cy="14" r="2.4" />
        <circle cx="21" cy="12" r="2.6" />
        <circle cx="16" cy="21" r="2.4" />
        <circle cx="21" cy="19" r="2.4" />
        <circle cx="21" cy="26" r="2.2" />
      </g>
    </svg>
  );
}

function ChromeLogo() {
  return (
    <svg width="30" height="30" viewBox="0 0 30 30">
      <circle cx="15" cy="15" r="15" fill="#fbc116" />
      <path d="M15 15 L2 7.5 A15 15 0 0 1 28 7.5 H15Z" fill="#e33b2e" />
      <path d="M2 7.5 A15 15 0 0 0 15 30 L21.5 18.75 L8.5 18.75Z" fill="#229342" />
      <circle cx="15" cy="15" r="7.4" fill="#fff" />
      <circle cx="15" cy="15" r="5.7" fill="#3272e8" />
    </svg>
  );
}

function Taskbar() {
  return (
    <div className="flex h-[60px] w-full items-center border-t border-[#3f3f3f] bg-[#1c1c1c] text-white">
      <div className="flex w-[490px] items-center pl-[25px]">
        <div className="relative mt-[-7px]">
          <svg width="34" height="38" viewBox="0 0 34 38">
            <defs>
              <linearGradient id="cloud" x1="0" y1="0" x2="0" y2="1">
                <stop offset="0" stopColor="#d3e2fb" />
                <stop offset="1" stopColor="#7ea4ec" />
              </linearGradient>
            </defs>
            <path d="M13 9 Q13 19 0 22 Q5 28 12 26 Q22 20 13 9Z" fill="#f5a623" />
            <rect x="0" y="23" width="30" height="14" rx="7" fill="url(#cloud)" />
            <circle cx="14" cy="26" r="7.5" fill="#c3d6f8" />
            <circle cx="22" cy="28" r="6" fill="#b9cff6" />
            <rect x="3" y="26" width="25" height="8" rx="4" fill="#bcd1f6" />
          </svg>
          <div className="absolute top-[1px] left-[14px] flex h-[20px] w-[20px] items-center justify-center rounded-full bg-[#ff99a4] text-[13px] text-black">6</div>
        </div>
        <div className="mt-[-1px] ml-[5px] text-[14.5px] leading-[20px] tracking-[-0.4px]">
          <div>26°C</div>
          <div className="text-[#c5c5c5]">Berawan</div>
        </div>
      </div>
      <TaskCell>
        <svg width="30" height="30" viewBox="0 0 30 30">
          <defs>
            <linearGradient id="win" x1="0" y1="0" x2="1" y2="1">
              <stop offset="0" stopColor="#8fe3fb" />
              <stop offset="0.5" stopColor="#38b8f8" />
              <stop offset="1" stopColor="#0a8ff0" />
            </linearGradient>
          </defs>
          <path d="M1 0H14.4V14.4H0V1Q0 0 1 0Z M15.6 0H29Q30 0 30 1V14.4H15.6Z M0 15.6H14.4V30H1Q0 30 0 29Z M15.6 15.6H30V29Q30 30 29 30H15.6Z" fill="url(#win)" />
        </svg>
      </TaskCell>
      <div className="mt-[-1px] ml-[3px] flex h-[40px] w-[274px] shrink-0 items-center overflow-hidden rounded-full border border-[#4a4a4a] bg-[#3a3a3a] pl-[13px]">
        <Search size={20} strokeWidth={2} className="text-[#e8e8e8]" />
        <span className="mt-px ml-[12px] text-[17.2px] tracking-[-0.35px] text-[#d5d5d5]">Search</span>
        <div className="mr-[1px] ml-auto">
          <SearchArt />
        </div>
      </div>
      <div className="ml-[4px] flex h-full">
        <TaskCell>
          <svg width="30" height="30" viewBox="0 0 30 30">
            <rect x="0" y="8" width="22" height="20" rx="1.5" fill="#6a6a6a" />
            <rect x="8" y="1" width="22" height="20" rx="1.5" fill="#ececec" />
            <rect x="8" y="8" width="14" height="13" fill="#a9a9a9" />
          </svg>
        </TaskCell>
        <TaskCell running>
          <SiOpenai size={30} />
        </TaskCell>
        <TaskCell running>
          <FaWhatsapp size={34} className="text-[#25d366]" />
          <div className="absolute top-[8px] left-[28px] flex h-[20px] w-[20px] items-center justify-center rounded-full bg-[#dd9fe3] text-[13px] text-black">2</div>
        </TaskCell>
        <TaskCell>
          <svg width="29" height="27" viewBox="0 0 29 27">
            <defs>
              <linearGradient id="cpa" x1="0" y1="0" x2="0" y2="1">
                <stop offset="0" stopColor="#1b8be8" />
                <stop offset="0.5" stopColor="#2cc3a5" />
                <stop offset="1" stopColor="#f5d723" />
              </linearGradient>
              <linearGradient id="cpb" x1="0" y1="0" x2="0" y2="1">
                <stop offset="0" stopColor="#9b5cf0" />
                <stop offset="0.5" stopColor="#f0569a" />
                <stop offset="1" stopColor="#fb9a4e" />
              </linearGradient>
            </defs>
            <path d="M8 1 H17 Q19.500 1 20.500 4 L21.500 7 H17 Q15 7 14 10 L11 20 H4 Q-1 20 .5 14 L4 4 Q5 1 8 1Z" fill="url(#cpa)" />
            <path d="M21 26 H12 Q9.500 26 8.500 23 L7.500 20 H11 Q13.500 20 14.500 16.500 L17.500 7 H25 Q30 7 28.500 13 L25 23 Q24 26 21 26Z" fill="url(#cpb)" />
            <path d="M8 1 H17 Q19.500 1 20.500 4 L21.500 7 H14 Q11 2 8 1Z" fill="#1c63c8" />
          </svg>
        </TaskCell>
        <TaskCell running>
          <svg width="30" height="28" viewBox="0 0 30 28">
            <path d="M0 2 Q0 0 2 0 H9 Q11 0 12.500 3 H28 Q30 3 30 5 V12 H0Z" fill="#e0a010" />
            <path d="M0 6 H12 L14 4 H28 Q30 4 30 6 V26 Q30 28 28 28 H2 Q0 28 0 26Z" fill="#ffd25c" />
            <path d="M0 18 H30 V26 Q30 28 28 28 H2 Q0 28 0 26Z" fill="#fdc233" />
            <path d="M5 28 V22 Q5 19 8 19 H22 Q25 19 25 22 V28Z" fill="#1877c9" />
            <rect x="9" y="23" width="12" height="2" rx="1" fill="#0d4f90" />
          </svg>
        </TaskCell>
        <TaskCell>
          <svg width="30" height="30" viewBox="0 0 30 30">
            <defs>
              <linearGradient id="eda" x1="0" y1="0" x2="1" y2="0.4">
                <stop offset="0" stopColor="#1b9de2" />
                <stop offset="0.55" stopColor="#35c1d8" />
                <stop offset="1" stopColor="#62e04a" />
              </linearGradient>
            </defs>
            <circle cx="15" cy="15" r="15" fill="#0f7fd6" />
            <path d="M0 13 A15 15 0 0 1 30 15 Q30 21 22 21 Q17 21 18 17.500 Q19 14 15 11.500 Q7 8 0 13Z" fill="url(#eda)" />
            <path d="M10 14 Q8 23 16 27 Q21 29 26 25 Q28 24 27 23 Q22 25 18 22 Q15 19 17 15.500 Q15 11 10 14Z" fill="#0b4fa3" />
            <path d="M17.500 17 Q17 21.500 24 21 Q28 20.500 30 17 V24 L27.500 23 Q22 24.500 18.500 21 Q17 19 17.500 17Z" fill="#1c1c1c" />
          </svg>
        </TaskCell>
        <div className="relative flex h-full w-[55px] items-center justify-center">
          <div className="absolute top-[4px] left-[3px] h-[50px] w-[50px] rounded-[5px] border border-[#363636] bg-[#2b2b2b]" />
          <div className="relative mt-[-1px]">
            <ChromeLogo />
            <div className="absolute -top-[6px] left-[17px] flex h-[20px] w-[20px] items-center justify-center rounded-full bg-[#bf360c] font-['Roboto',sans-serif] text-[12px] text-[#eee]">J</div>
          </div>
          <div className="absolute bottom-[5px] left-[18px] h-[4px] w-[20px] rounded-full bg-[#dd9fe3]" />
        </div>
        <TaskCell>
          <svg width="30" height="30" viewBox="0 0 30 30">
            <path d="M8 6 V3 Q8 1 10 1 H20 Q22 1 22 3 V6" fill="none" stroke="#2aa6ea" strokeWidth="2" />
            <path d="M0 5 H30 V26 Q30 30 26 30 H4 Q0 30 0 26Z" fill="#f1f1f1" />
            <rect x="9" y="11" width="5.500" height="5.500" fill="#f1511b" />
            <rect x="15.500" y="11" width="5.500" height="5.500" fill="#80cc28" />
            <rect x="9" y="17.500" width="5.500" height="5.500" fill="#00adef" />
            <rect x="15.500" y="17.500" width="5.500" height="5.500" fill="#fbbc09" />
          </svg>
        </TaskCell>
        <TaskCell running>
          <svg width="31" height="31" viewBox="0 0 31 31">
            <path d="M22 7 L5 20.500 Q4 21.500 3 20.700 L.7 18.600 Q0 17.800 .8 17 L20.500 .6 L23 0Z" fill="#0a6ab6" />
            <path d="M22 24 L5 10.500 Q4 9.500 3 10.300 L.7 12.400 Q0 13.200 .8 14 L20.500 30.400 L23 31Z" fill="#1085d2" />
            <path d="M22 0 L30 4 V27 L22 31 Z" fill="#2aa7f3" />
          </svg>
        </TaskCell>
        <TaskCell running>
          <svg width="30" height="30" viewBox="0 0 30 30">
            <rect width="30" height="30" rx="4" fill="#f47b20" />
            <path d="M2 1.500 H28 V4 Q15 6 2 4Z" fill="#fbb27a" />
            <path d="M9 8 Q13 6 15 9 Q17 6 21 8 Q25 10 22.500 15 Q25 20 21.500 22.500 Q17 24.500 15 21 Q13 24.500 8.500 22.500 Q5 20 7.500 15 Q5 10 9 8Z" fill="none" stroke="#fff" strokeWidth="3.2" />
            <path d="M11 15 H19 M12 12 V18 M18 12 V18" stroke="#fff" strokeWidth="2.600" />
          </svg>
        </TaskCell>
        <TaskCell running>
          <svg width="24" height="31" viewBox="0 0 24 31">
            <path d="M1 3 H23 V27 H1Z" fill="#5fcbe8" />
            <path d="M1 27 H23 V31 H1Z" fill="#b35a1c" />
            <path d="M1 26 H23 V28.500 H1Z" fill="#f3f3f3" />
            <path d="M4 0 V5 M8 0 V5 M12 0 V5 M16 0 V5 M20 0 V5" stroke="#1684b5" strokeWidth="2" />
            <path d="M5 10 H19 M5 15 H19 M5 20 H19" stroke="#10698f" strokeWidth="2.200" />
          </svg>
        </TaskCell>
      </div>
      <div className="ml-auto flex h-full items-center pr-[24px] text-[15px] leading-[20px] tracking-[-0.35px]">
        <ChevronUp size={20} strokeWidth={2} />
        <svg width="22" height="22" viewBox="0 0 22 22" className="ml-[19px]">
          <circle cx="11" cy="6" r="5.500" fill="#8f8f8f" />
          <path d="M4 16 A4.500 4.500 0 0 1 4 7 Q7 3 11 7 L16 16Z" fill="#d5d5d5" />
          <circle cx="15.500" cy="15" r="6.300" fill="#7d7d7d" />
          <path d="M13.800 12 V18 M17.200 12 V18" stroke="#fff" strokeWidth="1.600" />
        </svg>
        <div className="mt-[-2px] ml-[21px] w-[32px] text-center">
          <div>ENG</div>
          <div>US</div>
        </div>
        <svg width="22" height="18" viewBox="0 0 22 18" className="ml-[20px]" fill="none" stroke="#fff" strokeWidth="1.900">
          <path d="M1.500 6.500 Q11 -2.500 20.500 6.500 M4.500 9.800 Q11 3.500 17.500 9.800 M7.500 13 Q11 9.500 14.500 13" />
          <circle cx="11" cy="15.500" r="1.200" fill="#fff" />
        </svg>
        <svg width="20" height="20" viewBox="0 0 20 20" className="ml-[7px]" fill="none" stroke="#fff" strokeWidth="1.500">
          <path d="M1 7 H4.500 L9 2.500 V17.500 L4.500 13 H1Z" strokeLinejoin="round" />
          <path d="M11.500 7 Q13.500 10 11.500 13" />
          <path d="M14 4.500 Q17.500 10 14 15.500 M16.500 2.500 Q21 10 16.500 17.500" stroke="#6d6d6d" />
        </svg>
        <svg width="23" height="20" viewBox="0 0 23 20" className="ml-[9px]">
          <path d="M7 4 H17 Q19.500 4 19.500 6.500 V14.500 Q19.500 17 17 17 H5 Q2.500 17 2.500 14.500 V11" fill="none" stroke="#fff" strokeWidth="1.600" />
          <path d="M8 6 H17 V15 H5 V11Z" fill="#fff" />
          <rect x="20" y="8" width="2" height="5" fill="#fff" />
          <path d="M5 0 L1 7 H3.500 L2.500 12 L7 5 H4.500Z" fill="#fff" />
        </svg>
        <div className="mt-[-4px] ml-[20px] flex w-[78px] flex-col items-end tracking-[-0.3px] whitespace-nowrap">
          <div>20:23</div>
          <div>01/10/2025</div>
        </div>
      </div>
    </div>
  );
}

export default function App() {
  return (
    <div className="flex h-[1080px] w-[1920px] flex-col overflow-hidden bg-[#1c1c1c] font-['Open_Sans','Noto_Sans',sans-serif]">
      <TabStrip />
      <Toolbar />
      <div className="flex h-[911px]">
        <Sidebar />
        <Main />
        <Scrollbar />
      </div>
      <Taskbar />
    </div>
  );
}
